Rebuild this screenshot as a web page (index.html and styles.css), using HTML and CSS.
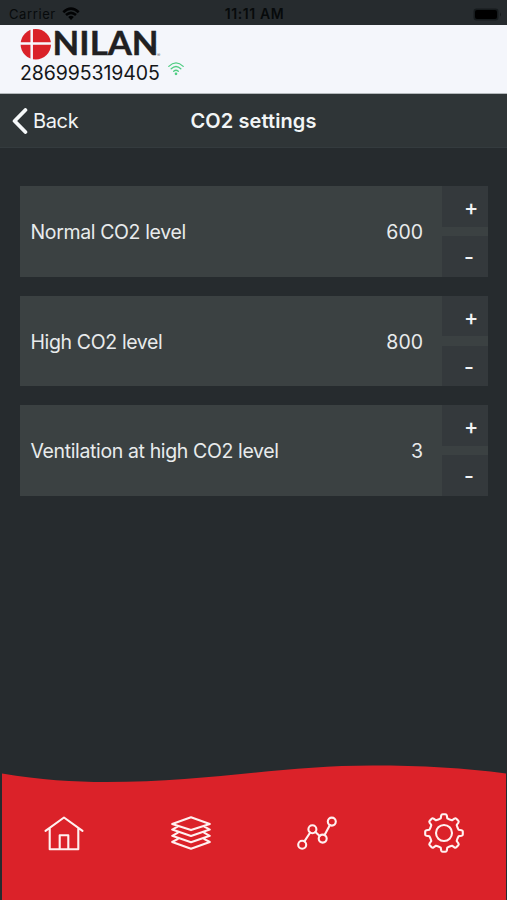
FILE: index.html
```html
<!DOCTYPE html>
<html lang="en">
<head>
<meta charset="utf-8">
<title>CO2 settings</title>
<link rel="stylesheet" href="styles.css">
</head>
<body>
<div class="app">
  <div class="status">
    <div class="carrier"><span>Carrier</span>
      <svg width="18" height="14" viewBox="0 0 18 14"><path d="M1.3 5.2Q9-1.8 16.7 5.2M4 8Q9 3.6 14 8" fill="none" stroke="#020304" stroke-width="2.6"/><path d="M6.2 10Q9 7.6 11.8 10L9 13z" fill="#020304"/></svg>
    </div>
    <div class="clock">11:11 AM</div>
    <svg class="battery" width="30" height="13" viewBox="0 0 30 13"><rect x=".5" y=".5" width="25" height="12" rx="3" fill="#161b1d"/><rect x="2" y="2" width="22" height="9" rx="2" fill="#000"/><path d="M27 4.5q2 2 0 4z" fill="#161b1d"/></svg>
  </div>
  <header class="brand">
    <svg class="logo" width="150" height="32" viewBox="0 0 150 32">
      <circle cx="15.8" cy="15.2" r="15.2" fill="#da2229"/>
      <path d="M11.7 0V32M0 14.6H31" stroke="#f7f8fc" stroke-width="2.5"/>
      <text class="wordmark" x="32.6" y="26.4" textLength="106" lengthAdjust="spacingAndGlyphs">NILAN</text>
      <text class="mark" x="137" y="27.5">®</text>
    </svg>
    <div class="device"><span class="serial">286995319405</span>
      <svg width="16" height="14" viewBox="0 0 16 14" fill="none" stroke="#50cd83" stroke-width="1.3" stroke-linecap="round"><path d="M.8 4.4Q8-2.6 15.2 4.4M3.2 6.8Q8 2.2 12.8 6.8M5.7 9.2Q8 7.2 10.3 9.2"/><circle cx="8" cy="11.8" r=".7" fill="#50cd83"/></svg>
    </div>
  </header>
  <nav class="titlebar">
    <div class="back"><svg width="16" height="26" viewBox="0 0 16 26"><path d="M13.4 2L2.6 13L13.4 24" fill="none" stroke="#f5f8f9" stroke-width="3.8" stroke-linecap="round" stroke-linejoin="round"/></svg><span>Back</span></div>
    <h1>CO2 settings</h1>
  </nav>
  <main class="list">
    <div class="card"><div class="field"><span class="label">Normal CO2 level</span><span class="value">600</span></div><div class="stepper"><div class="step">+</div><div class="step">-</div></div></div>
    <div class="card"><div class="field"><span class="label">High CO2 level</span><span class="value">800</span></div><div class="stepper"><div class="step">+</div><div class="step">-</div></div></div>
    <div class="card"><div class="field"><span class="label">Ventilation at high CO2 level</span><span class="value">3</span></div><div class="stepper"><div class="step">+</div><div class="step">-</div></div></div>
  </main>
  <footer class="tabs">
    <svg class="wave" width="504" height="20" viewBox="0 0 504 20"><path d="M0 8.5C38 15 72 17 104 17C205 17 280 .5 370 .5C420 .5 463 3 504 8.5V20H0z" fill="#db2229"/></svg>
    <div class="tabrow">
      <svg width="42" height="42" viewBox="-21 -21 42 42"><path d="M-18.5-2.2L0-15.5L18.5-2.2M-14.3-5V16.2H14.3V-5M-4.3 16V2.3H4.3V16"/></svg>
      <svg width="42" height="42" viewBox="-21 -21 42 42"><path d="M0-15.8L18.8-9L0-2.9L-18.8-9zM-13-6.6L-18.8-3.4L0 3L18.8-3.4L13-6.6M-13-.4L-18.8 2.8L0 9.2L18.8 2.8L13-.4M-13 5.8L-18.8 9L0 15.8L18.8 9L13 5.8"/></svg>
      <svg width="42" height="42" viewBox="-21 -21 42 42"><circle cx="-14.8" cy="11.7" r="4"/><circle cx="-4.6" cy="-3.8" r="4"/><circle cx="5.7" cy="5.6" r="4"/><circle cx="14.8" cy="-11.4" r="4"/><path d="M-12.6 8.4L-6.8-.5M-1.6-1.1L2.7 2.9M7.6 2.1L12.9-7.9"/></svg>
      <svg width="42" height="42" viewBox="-21 -21 42 42"><circle r="8"/><path d="M-3.3-14.6L-2.8-17.5Q-2.5-18.8-1.4-18.8H1.4Q2.5-18.8 2.8-17.5L3.3-14.6Q5.5-13.3 8-12.7L10.4-14.4Q11.5-15.1 12.3-14.3L14.3-12.3Q15.1-11.5 14.4-10.4L12.7-8Q13.3-5.5 14.6-3.3L17.5-2.8Q18.8-2.5 18.8-1.4V1.4Q18.8 2.5 17.5 2.8L14.6 3.3Q13.3 5.5 12.7 8L14.4 10.4Q15.1 11.5 14.3 12.3L12.3 14.3Q11.5 15.1 10.4 14.4L8 12.7Q5.5 13.3 3.3 14.6L2.8 17.5Q2.5 18.8 1.4 18.8H-1.4Q-2.5 18.8-2.8 17.5L-3.3 14.6Q-5.5 13.3-8 12.7L-10.4 14.4Q-11.5 15.1-12.3 14.3L-14.3 12.3Q-15.1 11.5-14.4 10.4L-12.7 8Q-13.3 5.5-14.6 3.3L-17.5 2.8Q-18.8 2.5-18.8 1.4V-1.4Q-18.8-2.5-17.5-2.8L-14.6-3.3Q-13.3-5.5-12.7-8L-14.4-10.4Q-15.1-11.5-14.3-12.3L-12.3-14.3Q-11.5-15.1-10.4-14.4L-8-12.7Q-5.5-13.3-3.3-14.6z"/></svg>
    </div>
  </footer>
</div>
</body>
</html>
```
FILE: styles.css
```css
* { box-sizing: border-box; }
body { margin: 0; background: #262b2e; font-family: Inter, Roboto, "Liberation Sans", sans-serif; }
svg { display: block; flex: none; }
.app { width: 507px; height: 900px; display: flex; flex-direction: column; background: #262b2e; overflow: hidden; }
.status { height: 25px; display: grid; grid-template-columns: 1fr auto 1fr; align-items: center; padding: 3px 4px 0 9px; font-size: 13px; line-height: 20px; color: #070a0b; }
.carrier { display: flex; align-items: center; gap: 6px; letter-spacing: .6px; }
.clock { font-weight: 600; font-size: 14px; letter-spacing: .6px; margin-left: -3px; }
.battery { justify-self: end; }
.brand { height: 69px; padding: 4px 0 0 20px; background: #f4f6fb; border-bottom: 1px solid #b4b9bc; }
.logo { overflow: visible; }
.wordmark { font-family: Lato, sans-serif; font-size: 32px; font-weight: 700; fill: #202022; stroke: #202022; stroke-width: .4px; }
.mark { font-size: 5px; fill: #77787b; }
.device { display: flex; gap: 8px; height: 24px; line-height: 24px; font-size: 19.5px; color: #151719; }
.serial { width: 140px; letter-spacing: -.1px; white-space: nowrap; }
.device svg { margin-top: 1px; }
.titlebar { height: 54px; display: grid; grid-template-columns: 1fr auto 1fr; align-items: center; padding: 0 12px; background: #2f3537; color: #f2f5f6; border-bottom: 1px solid #343b3e; }
.back { display: flex; align-items: center; gap: 5px; font-size: 20px; letter-spacing: -.35px; }
h1 { margin: 0; font-size: 20px; line-height: 26px; font-weight: 600; letter-spacing: .1px; }
.list { padding: 38px 19px 0 20px; display: flex; flex-direction: column; gap: 19px; }
.card { height: 90.5px; display: flex; background: #3b4142; }
.field { flex: 1; display: flex; align-items: center; justify-content: space-between; padding: 2px 19px 0 10.5px; font-size: 19.5px; color: #e8ebec; }
.label { letter-spacing: -.37px; white-space: nowrap; }
.stepper { width: 46px; display: flex; flex-direction: column; justify-content: space-between; }
.step { height: 40.5px; padding-left: 22px; background: #34393c; color: #f2f4f5; font-size: 21.5px; font-weight: 500; line-height: 43px; }
.tabs { margin: auto 1px 0 2px; height: 135px; }
.tabrow { height: 116px; margin-top: -1px; display: flex; justify-content: space-between; padding: 28px 41px 0; background: #db2229; }
.tabrow svg { fill: none; stroke: #fff1f0; stroke-width: 2.1; stroke-linejoin: round; stroke-linecap: round; }
```
